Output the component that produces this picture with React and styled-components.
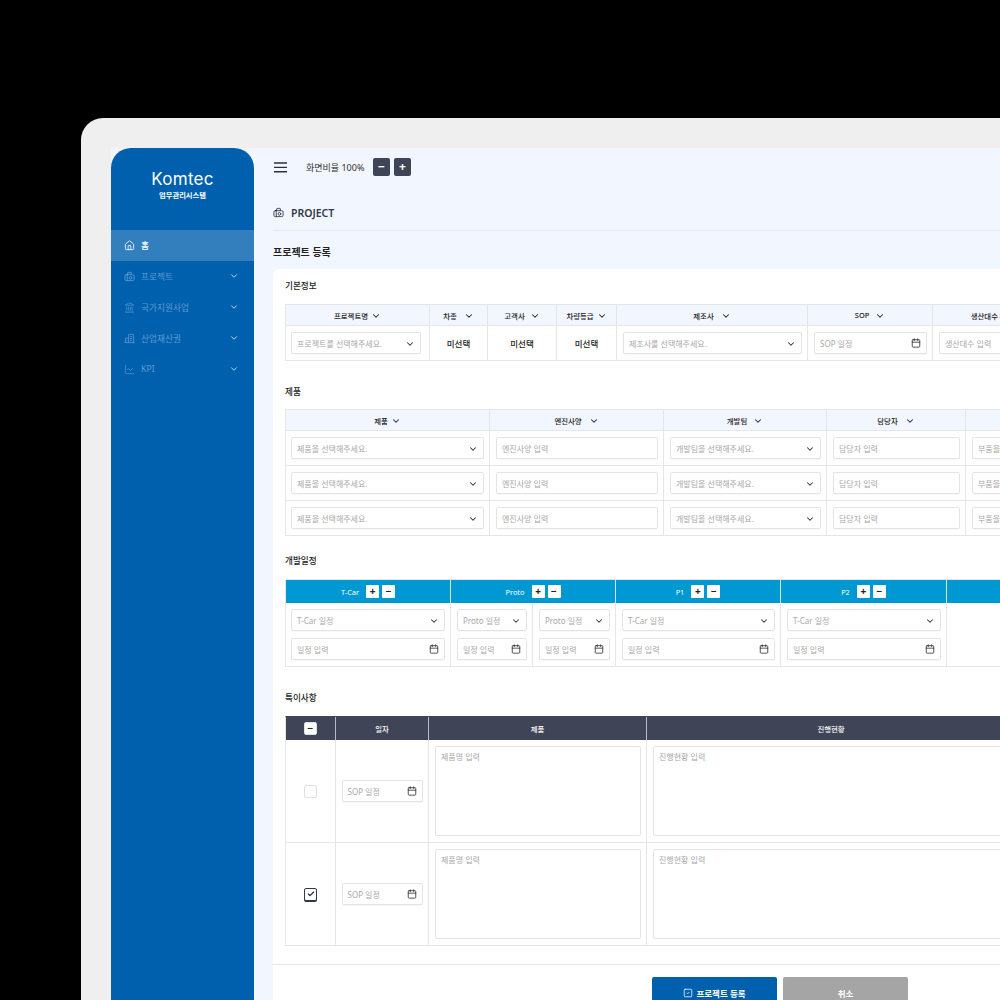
import React from 'react';
import styled, { createGlobalStyle } from 'styled-components';
import { ChevronDown, Calendar, House, Landmark, ChartLine, Check, SquareCheck } from 'lucide-react';

const Global = createGlobalStyle`
  html, body { margin: 0; padding: 0; background: #000; width: 1000px; height: 1000px; overflow: hidden; }
  * { box-sizing: border-box; }
  body { font-family: "Noto Sans", "Noto Sans CJK KR", sans-serif; }
`;

const Page = styled.div`
  width: 1000px; height: 1000px; overflow: hidden; background: #000; padding: 118px 0 0 81px;
`;
const Frame = styled.div`
  width: 1300px; height: 1000px; background: #efefef; border-radius: 22px 0 0 0; padding: 30px 0 0 30px;
`;
const Screen = styled.div`
  display: flex; width: 1270px; height: 970px; background: #f2f6ff;
`;
const Sidebar = styled.aside`
  flex: 0 0 143px; background: #0060ae; border-radius: 20px 20px 0 0; display: flex; flex-direction: column;
`;
const Brand = styled.div`
  height: 82px; display: flex; flex-direction: column; align-items: center; padding-top: 19px; color: #fff;
`;
const BrandName = styled.div`
  font-family: Inter, "Noto Sans", sans-serif; font-size: 17px; line-height: 24px; font-weight: 400; letter-spacing: 0.3px;
`;
const BrandSub = styled.div`
  font-size: 7.3px; line-height: 10px; font-weight: 700; margin-top: -1px;
`;
const NavItem = styled.div`
  height: 31px; display: flex; align-items: center; padding: 0 15px 1px 13px; gap: 6px;
  background: ${p => (p.$active ? '#337fbd' : 'transparent')};
  color: ${p => (p.$active ? '#fff' : '#5f9bd0')};
  font-size: 8.7px; font-weight: ${p => (p.$active ? 500 : 400)};
  svg.arrow { margin-left: auto; color: #cfe1f2; }
`;
const Main = styled.main`
  flex: 1; padding-left: 19px; min-width: 0;
`;
const TopBar = styled.div`
  height: 38px; display: flex; align-items: center; padding-left: 1px;
`;
const BurgerIcon = styled.svg`
  width: 13px; height: 11px; margin-right: 19px; flex: none;
`;
const Zoom = styled.span`
  font-size: 9px; color: #333; width: 67px; font-weight: 400;
`;
const SquareBtn = styled.button`
  width: 17px; height: 18px; padding: 0; border: 0; border-radius: 2px; background: #3f4456; color: #fff;
  font: 700 12px/18px "Noto Sans", sans-serif; margin-right: 4px; text-align: center;
`;
const Crumb = styled.div`
  height: 45px; padding: 17px 0 8px; border-bottom: 1px solid #e6e8ee; display: flex; align-items: center; gap: 7px;
  color: #30384a; font-size: 10.5px; font-weight: 600;
`;
const PageTitle = styled.h1`
  margin: 14px 0 10px; font-size: 10px; line-height: 14px; font-weight: 600; color: #222;
`;
const Card = styled.section`
  background: #fff; border-radius: 6px 0 0 0; padding: 12px 0 0 12px; height: 800px;
`;
const SectionTitle = styled.h2`
  margin: ${p => p.$top || 0}px 0 ${p => p.$bottom || 11}px; font-size: 8.6px; line-height: 10px; padding-bottom: 2px; font-weight: 500; color: #222;
`;
const Grid = styled.div`
  display: grid; grid-template-columns: ${p => p.$cols}; width: max-content;
  border-top: 1px solid ${p => p.$topColor || '#e6e6e6'}; border-left: 1px solid #e6e6e6;
`;
const Head = styled.div`
  height: 21px; background: #f2f6fe; border-right: 1px solid #e6e6e6; border-bottom: 1px solid #e6e6e6;
  display: flex; align-items: center; justify-content: center; gap: ${p => p.$gap}px; color: #222; font-size: 7.4px; font-weight: 500;
  svg { flex: none; }
`;
const BlueHead = styled.div`
  height: 23px; background: #0098d3; border-right: 1px solid #d5e6ef; display: flex; align-items: center; justify-content: center;
  color: #fff; font-size: 7.4px; font-weight: 400; grid-column: span ${p => p.$span || 1};
`;
const BlueLabel = styled.span`
  margin-right: 7px;
`;
const MiniBtn = styled.span`
  width: 13px; height: 13px; background: #fff; color: #222; border-radius: 1px;
  display: flex; align-items: center; justify-content: center; font: 700 10px/13px "Noto Sans", sans-serif;
  & + & { margin-left: 3px; }
`;
const DarkHead = styled.div`
  height: 23px; background: #3f4456; border-right: 1px solid #b9bcc5; display: flex; align-items: center; justify-content: center;
  color: #fff; font-size: 7.4px; font-weight: 500; padding-bottom: 1px;
`;
const Cell = styled.div`
  border-right: 1px solid #e6e6e6; border-bottom: 1px solid #e6e6e6;
  padding: 6px 5px 6px ${p => (p.$first || p.$center ? 5 : 6)}px;
  display: flex; flex-direction: ${p => (p.$stack ? 'column' : 'row')}; gap: 7px;
  align-items: ${p => (p.$center ? 'center' : 'stretch')}; justify-content: ${p => (p.$center ? 'center' : 'flex-start')};
`;
const Text = styled.span`
  font-size: 8.5px; font-weight: 500; color: #222;
`;
const Field = styled.div`
  height: 22px; flex: ${p => (p.$w ? `0 0 ${p.$w}px` : p.$fixed ? '0 0 22px' : '1')}; min-width: 0; background: #fff;
  border: 1px solid #e4e4e4; border-radius: 2px; padding: 0 5px;
  display: flex; align-items: center; justify-content: space-between; color: #a8a8a8; font-size: 8px; white-space: nowrap; overflow: hidden;
  box-shadow: 0 1px 1px rgba(0,0,0,.03);
  svg { flex: none; color: #333; }
`;
const Area = styled.div`
  height: 90px; flex: 1; border: 1px solid #e4e4e4; border-radius: 2px; padding: 4px 5px; color: #a8a8a8; font-size: 8px; line-height: 11px;
`;
const Box = styled.span`
  width: 13px; height: 13px; border-radius: 2px; display: flex; align-items: center; justify-content: center;
  background: #fff; border: 1px solid ${p => (p.$on ? '#30384a' : '#e0e0e0')}; color: #222;
  box-shadow: ${p => (p.$on ? '0 1px 0 #30384a' : 'none')};
  font: 700 10px/11px "Noto Sans", sans-serif;
`;
const Footer = styled.div`
  margin: 18px 0 0 -12px; border-top: 1px solid #e6e6e6; padding: 12px 0 0 379px; display: flex; gap: 6px;
`;
const Action = styled.button`
  width: 125px; height: 32px; border: 0; border-radius: 2px; background: ${p => (p.$gray ? '#a5a5a5' : '#0060ae')}; color: #fff;
  font: 700 8.5px "Noto Sans", "Noto Sans CJK KR", sans-serif; display: flex; align-items: center; justify-content: center; gap: 3px; padding: 0;
`;
const ChevIcon = styled(ChevronDown)`
  margin-top: 2px;
`;

const Chev = () => <ChevIcon size={10} strokeWidth={2.5} />;
const Cal = () => <Calendar size={10} strokeWidth={2} />;

const Burger = () => (
  <BurgerIcon viewBox="0 0 13 11" fill="none" stroke="#2a3040" strokeWidth="1.4">
    <path d="M0 1h13M0 5.4h13M0 9.8h13" />
  </BurgerIcon>
);

const ProjectIcon = ({ size = 12 }) => (
  <svg width={size} height={size} viewBox="0 0 24 24" fill="none" stroke="currentColor" strokeWidth="1.9" strokeLinejoin="round" strokeLinecap="round">
    <rect x="2" y="8" width="20" height="13" rx="3" />
    <path d="M8 8V4a1 1 0 0 1 1-1h6a1 1 0 0 1 1 1v4" />
    <circle cx="14" cy="15" r="3" />
    <path d="M7 8v13" />
  </svg>
);

const PatentIcon = () => (
  <svg width="11" height="11" viewBox="0 0 24 24" fill="none" stroke="currentColor" strokeWidth="1.7" strokeLinejoin="round" strokeLinecap="round">
    <path d="M10 21V4a1 1 0 0 1 1-1h9a1 1 0 0 1 1 1v17" />
    <path d="M10 11H4a1 1 0 0 0-1 1v9" />
    <path d="M2 21h20" />
    <path d="M14 8h3M14 12h3M14 16h3M6 16h1" />
  </svg>
);

const HeadLabel = ({ children, gap = 7 }) => <Head $gap={gap}>{children}<Chev /></Head>;
const Select = ({ children, w, fixed }) => <Field $w={w} $fixed={fixed}>{children}<Chev /></Field>;
const DateF = ({ children, w, fixed }) => <Field $w={w} $fixed={fixed}>{children}<Cal /></Field>;

const nav = [
  { label: '홈', icon: <House size={11} strokeWidth={1.8} />, active: true },
  { label: '프로젝트', icon: <ProjectIcon size={11} /> },
  { label: '국가지원사업', icon: <Landmark size={11} strokeWidth={1.5} /> },
  { label: '산업재산권', icon: <PatentIcon /> },
  { label: 'KPI', icon: <ChartLine size={11} strokeWidth={1.5} /> },
];

const BlueCol = ({ label, span }) => (
  <BlueHead $span={span}>
    <BlueLabel>{label}</BlueLabel>
    <MiniBtn>+</MiniBtn>
    <MiniBtn>−</MiniBtn>
  </BlueHead>
);

const ScheduleCell = ({ top, first }) => (
  <Cell $stack $first={first}>
    <Select fixed>{top}</Select>
    <DateF fixed>일정 입력</DateF>
  </Cell>
);

const NoteRow = ({ on }) => (
  <>
    <Cell $center>
      <Box $on={on}>{on && <Check size={8} strokeWidth={3.5} />}</Box>
    </Cell>
    <Cell $center>
      <DateF w={81}>SOP 일정</DateF>
    </Cell>
    <Cell><Area>제품명 입력</Area></Cell>
    <Cell><Area>진행현황 입력</Area></Cell>
  </>
);

export default function App() {
  return (
    <Page>
      <Global />
      <Frame>
        <Screen>
          <Sidebar>
            <Brand>
              <BrandName>Komtec</BrandName>
              <BrandSub>업무관리시스템</BrandSub>
            </Brand>
            {nav.map((n, i) => (
              <NavItem key={n.label} $active={n.active}>
                {n.icon}
                <span>{n.label}</span>
                {i > 0 && <ChevronDown className="arrow" size={10} strokeWidth={2.2} />}
              </NavItem>
            ))}
          </Sidebar>
          <Main>
            <TopBar>
              <Burger />
              <Zoom>화면비율 100%</Zoom>
              <SquareBtn>−</SquareBtn>
              <SquareBtn>+</SquareBtn>
            </TopBar>
            <Crumb><ProjectIcon size={11} /> PROJECT</Crumb>
            <PageTitle>프로젝트 등록</PageTitle>
            <Card>
              <SectionTitle>기본정보</SectionTitle>
              <Grid $cols="144px 58px 69px 60px 191px 125px 134px">
                <HeadLabel gap={3}>프로젝트명</HeadLabel>
                <HeadLabel>차종</HeadLabel>
                <HeadLabel gap={5}>고객사</HeadLabel>
                <HeadLabel gap={3}>차량등급</HeadLabel>
                <HeadLabel>제조사</HeadLabel>
                <HeadLabel gap={6}>SOP</HeadLabel>
                <HeadLabel>생산대수 (대)</HeadLabel>
                <Cell $first><Select w={130}>프로젝트를 선택해주세요.</Select></Cell>
                <Cell $center><Text>미선택</Text></Cell>
                <Cell $center><Text>미선택</Text></Cell>
                <Cell $center><Text>미선택</Text></Cell>
                <Cell><Select>제조사를 선택해주세요.</Select></Cell>
                <Cell><DateF>SOP 일정</DateF></Cell>
                <Cell><Field>생산대수 입력</Field></Cell>
              </Grid>

              <SectionTitle $top={26} $bottom={10}>제품</SectionTitle>
              <Grid $cols="204px 174px 163px 139px 180px">
                <HeadLabel gap={3}>제품</HeadLabel>
                <HeadLabel>엔진사양</HeadLabel>
                <HeadLabel gap={6}>개발팀</HeadLabel>
                <HeadLabel>담당자</HeadLabel>
                <HeadLabel>부품</HeadLabel>
                {[0, 1, 2].map(i => (
                  <React.Fragment key={i}>
                    <Cell $first><Select>제품을 선택해주세요.</Select></Cell>
                    <Cell><Field>엔진사양 입력</Field></Cell>
                    <Cell><Select>개발팀을 선택해주세요.</Select></Cell>
                    <Cell><Field>담당자 입력</Field></Cell>
                    <Cell><Select>부품을 선택해주세요.</Select></Cell>
                  </React.Fragment>
                ))}
              </Grid>

              <SectionTitle $top={20}>개발일정</SectionTitle>
              <Grid $cols="165px 82px 83px 165px 166px 100px">
                <BlueCol label="T-Car" />
                <BlueCol label="Proto" span={2} />
                <BlueCol label="P1" />
                <BlueCol label="P2" />
                <BlueHead />
                <ScheduleCell first top="T-Car 일정" />
                <ScheduleCell top="Proto 일정" />
                <ScheduleCell top="Proto 일정" />
                <ScheduleCell top="T-Car 일정" />
                <ScheduleCell top="T-Car 일정" />
                <Cell />
              </Grid>

              <SectionTitle $top={26}>특이사항</SectionTitle>
              <Grid $cols="50px 93px 218px 369px" $topColor="#3f4456">
                <DarkHead><Box>−</Box></DarkHead>
                <DarkHead>일자</DarkHead>
                <DarkHead>제품</DarkHead>
                <DarkHead>진행현황</DarkHead>
                <NoteRow />
                <NoteRow on />
              </Grid>

              <Footer>
                <Action><SquareCheck size={10} strokeWidth={1.8} /> 프로젝트 등록</Action>
                <Action $gray>취소</Action>
              </Footer>
            </Card>
          </Main>
        </Screen>
      </Frame>
    </Page>
  );
}
